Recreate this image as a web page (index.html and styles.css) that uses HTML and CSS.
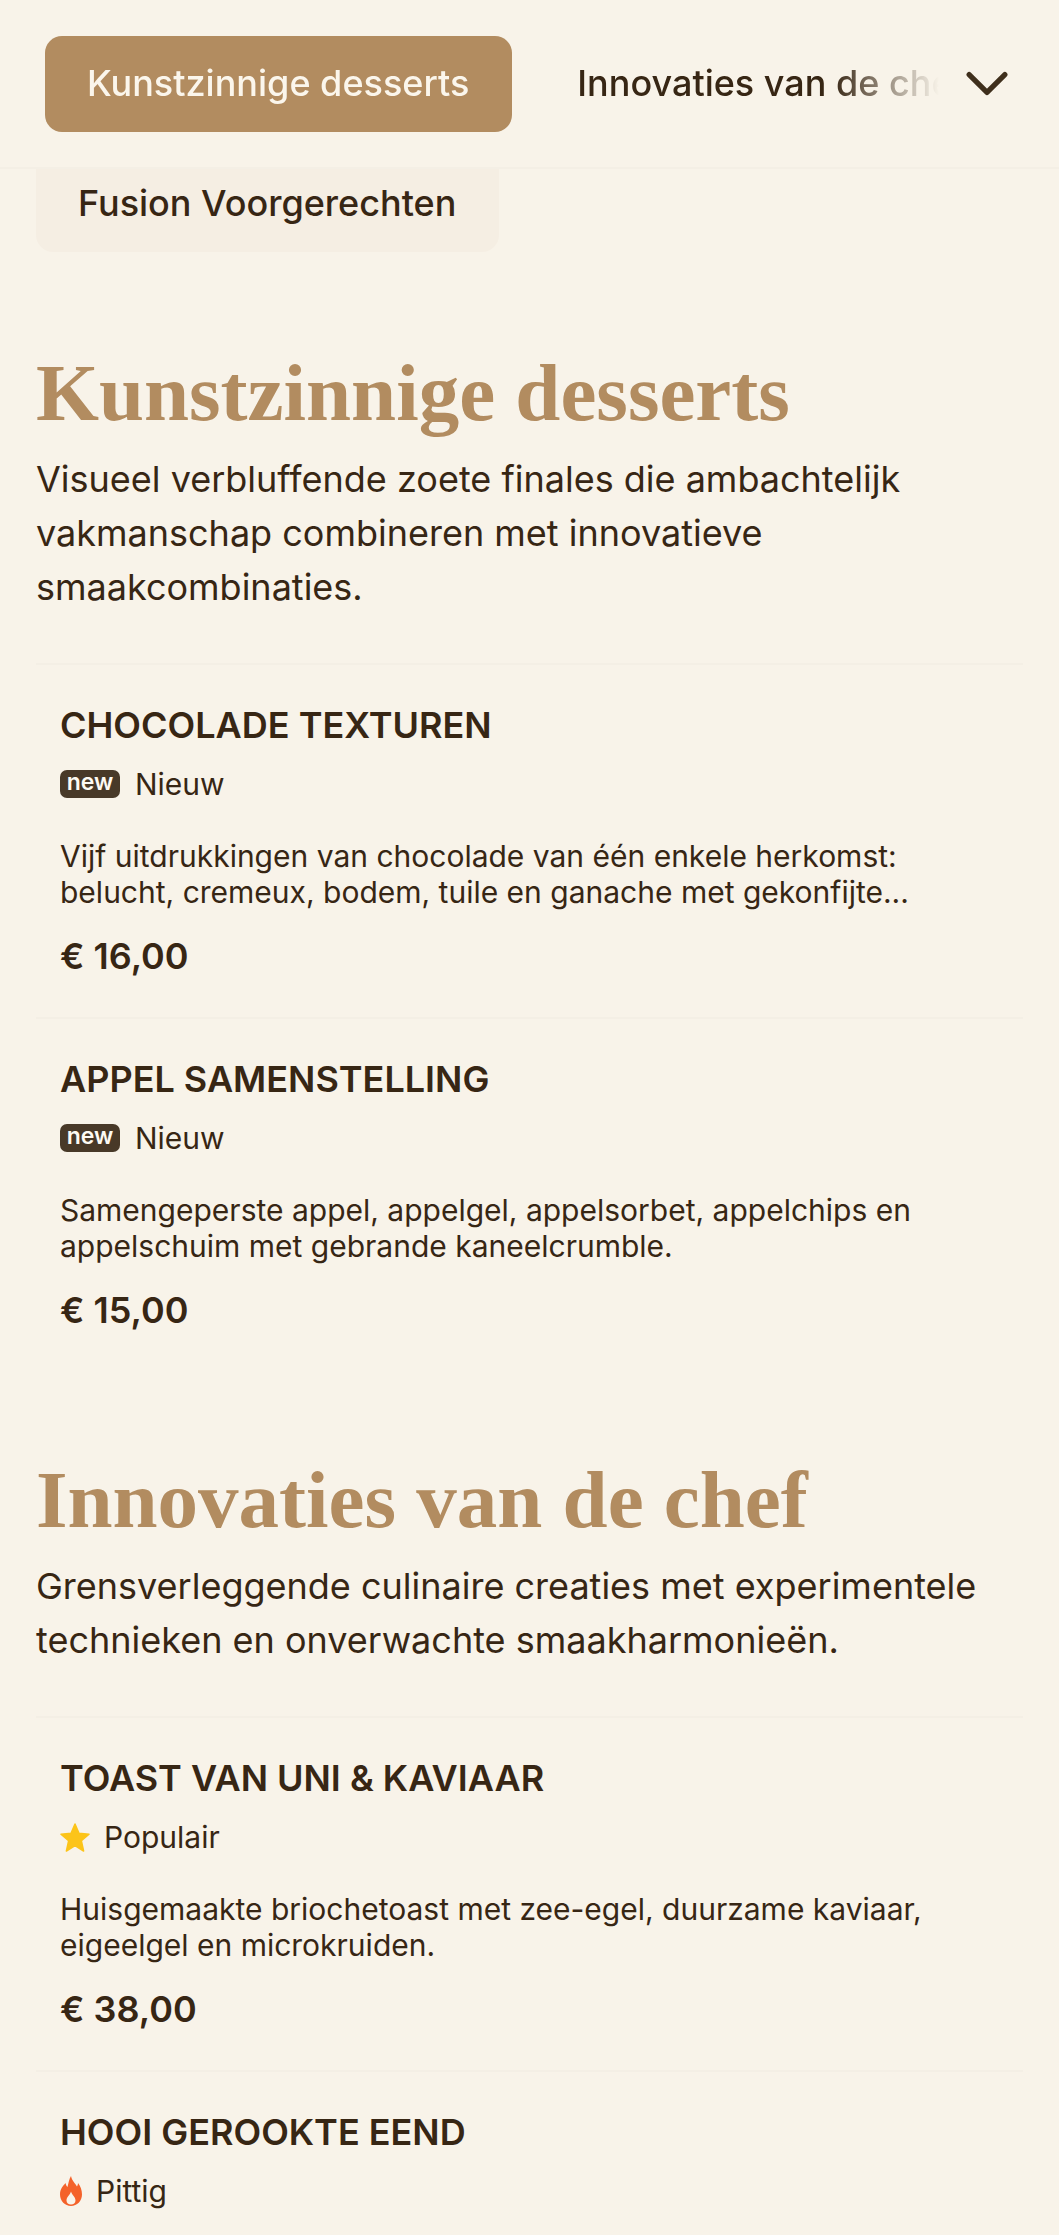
FILE: index.html
```html
<!DOCTYPE html>
<html>
<head>
  <link rel="stylesheet" href="styles.css">
</head>
<body>
  <div class="nav">
    <div class="nav-tabs">
      <div class="nav-tab active">Kunstzinnige desserts</div>
      <div class="nav-tab">Innovaties van de chef</div>
    </div>
    <svg class="nav-toggle" viewBox="0 0 40 24" fill="none">
      <path d="M3 3 L20 20 L37 3" stroke="#3f2f1c" stroke-width="5" stroke-linecap="round" stroke-linejoin="round"/>
    </svg>
  </div>
  <div class="menu-tab">Fusion Voorgerechten</div>

  <div class="section">
    <h1 class="section-title">Kunstzinnige desserts</h1>
    <p class="section-desc">Visueel verbluffende zoete finales die ambachtelijk vakmanschap combineren met innovatieve smaakcombinaties.</p>

    <div class="item">
      <h2 class="item-name">Chocolade texturen</h2>
      <div class="tag"><span class="tag-new">new</span>Nieuw</div>
      <p class="item-desc">Vijf uitdrukkingen van chocolade van één enkele herkomst: belucht, cremeux, bodem, tuile en ganache met gekonfijte...</p>
      <div class="price">€ 16,00</div>
    </div>
    <div class="item">
      <h2 class="item-name">Appel samenstelling</h2>
      <div class="tag"><span class="tag-new">new</span>Nieuw</div>
      <p class="item-desc">Samengeperste appel, appelgel, appelsorbet, appelchips en appelschuim met gebrande kaneelcrumble.</p>
      <div class="price">€ 15,00</div>
    </div>
  </div>

  <div class="section">
    <h1 class="section-title">Innovaties van de chef</h1>
    <p class="section-desc">Grensverleggende culinaire creaties met experimentele technieken en onverwachte smaakharmonieën.</p>

    <div class="item">
      <h2 class="item-name">Toast van uni &amp; kaviaar</h2>
      <div class="tag">
        <svg class="tag-star" viewBox="0 0 30 29"><path d="M15 1 L19 10.300 L29 11.200 L21.400 17.800 L23.600 28 L15 22.600 L6.400 28 L8.600 17.800 L1 11.200 L11 10.300 Z" fill="#fcc419" stroke="#fcc419" stroke-width="1.500" stroke-linejoin="round"/></svg>
        Populair
      </div>
      <p class="item-desc">Huisgemaakte briochetoast met zee-egel, duurzame kaviaar, eigeelgel en microkruiden.</p>
      <div class="price">€ 38,00</div>
    </div>
    <div class="item item-last">
      <h2 class="item-name">Hooi gerookte eend</h2>
      <div class="tag">
        <svg class="tag-fire" viewBox="0 0 22 30"><path fill-rule="evenodd" d="M11 0 C12 5 15 7 17 10.500 C17.500 9.500 18 8.500 18 7 C20.500 10 22 14 22 18.500 C22 25 17 30 11 30 C5 30 0 25 0 18.500 C0 13 3 10 5.500 7 C6 9 6.500 10 7.500 11 C8.500 7 9 3 11 0 Z M11 15.500 C10 19 6.500 21 6.500 24.500 C6.500 27 8.500 28.500 11 28.500 C13.500 28.500 15.500 27 15.500 24.500 C15.500 21 12 19 11 15.500 Z" fill="#f4622a"/></svg>
        Pittig
      </div>
    </div>
  </div>
</body>
</html>
```

FILE: styles.css
```css
html {
  height: 100%;
  overflow: hidden;
}

body {
  margin: 0;
  background-color: #f8f3e9;
  color: #372614;
  font-family: Inter, "Noto Sans", sans-serif;
}

.nav {
  position: relative;
  z-index: 2;
  display: flex;
  align-items: center;
  height: 169px;
  padding: 0 51px 0 45px;
  box-sizing: border-box;
  background-color: #f8f3e9;
  border-bottom: 2px solid #f4efe5;
}

.nav-tabs {
  display: flex;
  flex: 1;
  gap: 23px;
  overflow: hidden;
  white-space: nowrap;
  margin-right: 27px;
  -webkit-mask-image: linear-gradient(to right, #000 88%, transparent 100%);
  mask-image: linear-gradient(to right, #000 88%, transparent 100%);
}

.nav-tab {
  flex-shrink: 0;
  height: 96px;
  line-height: 94px;
  padding: 0 43px 0 42px;
  border-radius: 17px;
  font-size: 36px;
  font-weight: 500;
}

.nav-tab.active {
  background-color: #b28c60;
  color: #fbf6ec;
}

.nav-toggle {
  width: 42px;
  height: 26px;
}

.menu-tab {
  width: 463px;
  box-sizing: border-box;
  height: 111px;
  margin: -28px 0 19px 36px;
  padding: 28px 0 0 42px;
  line-height: 68px;
  border-radius: 17px;
  background-color: #f5eee3;
  font-size: 36px;
  font-weight: 500;
}

.section {
  padding: 0 36px 7px;
}

.section-title {
  margin: 0;
  padding-top: 80px;
  line-height: 84px;
  font-family: "Liberation Serif", serif;
  font-size: 81px;
  font-weight: 700;
  color: #b28c60;
}

.section-desc {
  margin: 17px 0 49px;
  font-size: 36px;
  line-height: 54px;
}

.item {
  padding: 36px 24px 37px;
  border-top: 2px solid #f4efe5;
}

.item-last {
  padding-bottom: 0;
}

.item-name {
  margin: 0;
  font-size: 36px;
  line-height: 48px;
  font-weight: 600;
  text-transform: uppercase;
}

.tag {
  display: flex;
  align-items: center;
  gap: 14px;
  margin-top: 14px;
  font-size: 30px;
  line-height: 42px;
}

.tag-new {
  width: 60px;
  height: 28px;
  margin-right: 1px;
  line-height: 24px;
  border-radius: 7px;
  background-color: #483928;
  color: #fdfaf3;
  font-size: 23px;
  font-weight: 600;
  text-align: center;
}

.tag-star {
  width: 30px;
  height: 29px;
}

.tag-fire {
  width: 22px;
  height: 30px;
}

.item-desc {
  margin: 33px 0 0;
  font-size: 30px;
  line-height: 36px;
}

.price {
  margin-top: 22px;
  font-size: 36px;
  line-height: 48px;
  font-weight: 600;
}
```
